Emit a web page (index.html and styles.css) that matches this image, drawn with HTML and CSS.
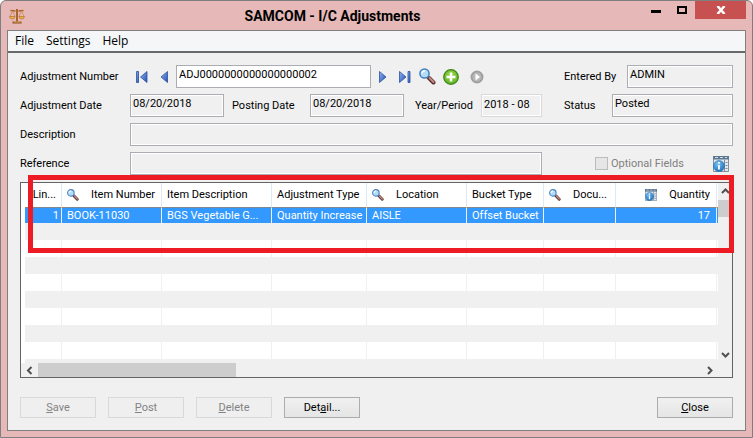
FILE: index.html
```html
<!DOCTYPE html>
<html lang="en">
<head>
  <meta charset="UTF-8">
  <meta name="viewport" content="width=device-width, initial-scale=1.0">
  <title>SAMCOM - I/C Adjustments</title>
  <link rel="stylesheet" href="styles.css">
</head>
<body>
  <!-- shared icons -->
  <svg class="sprite" width="0" height="0" aria-hidden="true">
    <defs>
      <linearGradient id="blue" x1="0" y1="0" x2="1" y2="1">
        <stop offset="0" stop-color="#8fb4f0"/>
        <stop offset="1" stop-color="#2450b4"/>
      </linearGradient>
      <radialGradient id="green" cx=".5" cy=".4" r=".6">
        <stop offset="0" stop-color="#a8dc50"/>
        <stop offset="1" stop-color="#5cb024"/>
      </radialGradient>
      <radialGradient id="info" cx=".4" cy=".3" r=".8">
        <stop offset="0" stop-color="#7cc4f4"/>
        <stop offset="1" stop-color="#1468b8"/>
      </radialGradient>
    </defs>
    <symbol id="i-search" viewBox="0 0 17 17">
      <path d="M10 10l4.500 4.500" stroke="#5a2c2c" stroke-width="4" stroke-linecap="round"/>
      <path d="M10.500 10l4 4" stroke="#c08c84" stroke-width="2" stroke-linecap="round"/>
      <circle cx="5.500" cy="5.500" r="4.600" fill="#b4dcfa" stroke="#4480bc" stroke-width="1.500"/>
      <path d="M3 5.500a2.500 2.500 0 0 1 3-2.500" stroke="#fff" stroke-width="1.500" fill="none"/>
    </symbol>
    <symbol id="i-info" viewBox="0 0 16 16">
      <path d="M.5 .5h15v15H.5z" fill="#e4e8ec" stroke="#8090a0"/>
      <path d="M0 0h16v3.500H0z" fill="#5c7890"/>
      <path d="M2 1.500h3M7 1.500h3M12 1.500h2" stroke="#c8dcec"/>
      <path d="M11.500 4v11M12.500 6.500h2M12.500 9.500h2M12.500 12.500h2" stroke="#7c8c9c"/>
      <circle cx="6" cy="10" r="5.500" fill="url(#info)" stroke="#2c70b0" stroke-width=".6"/>
      <path d="M6 9v4.500M6 6v1.700" stroke="#fff" stroke-width="1.700"/>
    </symbol>
  </svg>

  <div class="window">
    <header class="title-bar">
      <svg class="app-icon" width="16" height="16" viewBox="0 0 16 16" fill="none">
        <path d="M8 1v13" stroke="#a8642c" stroke-width="2"/>
        <path d="M1.500 2.500l5 .5M9.500 3l5-.5" stroke="#a8642c" stroke-width="1.600"/>
        <path d="M3.500 3l-2.500 5.500M3.500 3l2.500 5.500M12.500 3L10 8.500M12.500 3l2.500 5.500" stroke="#c88c50" stroke-width=".8"/>
        <path d="M.5 8.500h5.500q-.5 2.500-2.700 2.500T.5 8.500zM10 8.500h5.500q-.5 2.500-2.700 2.500T10 8.500z" fill="#f0b43c" stroke="#a8642c" stroke-width=".6"/>
        <path d="M3.500 14.500h9" stroke="#8c4c20" stroke-width="2"/>
        <path d="M4.500 14h7" stroke="#f0c060" stroke-width=".8"/>
      </svg>
      <h1 class="title">SAMCOM - I/C Adjustments</h1>
      <div class="window-controls">
        <button class="win-btn" aria-label="Minimize"><svg width="10" height="10"><path d="M0 5h10v3H0z"/></svg></button>
        <button class="win-btn" aria-label="Maximize"><svg width="10" height="10"><path d="M1 2h8v6H1z" fill="none" stroke="#000" stroke-width="2"/></svg></button>
        <button class="win-btn win-close" aria-label="Close window"><svg width="10" height="8"><path d="M1.500 0l7 8M8.500 0l-7 8" stroke="#fff" stroke-width="2.500"/></svg></button>
      </div>
    </header>

    <div class="client">
      <nav class="menu-bar">
        <button class="menu-item">File</button>
        <button class="menu-item">Settings</button>
        <button class="menu-item">Help</button>
      </nav>

      <main class="content">
        <form class="form">
          <div class="form-row">
            <div class="main-fields">
              <label class="label" for="adj-number">Adjustment Number</label>
              <div class="number-nav">
                <button type="button" class="icon-btn icon-first" aria-label="First"><svg width="12" height="12"><path d="M.5 .5h2v11h-2z" fill="url(#blue)" stroke="#2c509c" stroke-width=".8"/><path d="M11 .5v11L4.500 6z" fill="url(#blue)" stroke="#2c509c" stroke-width=".8"/></svg></button>
                <button type="button" class="icon-btn" aria-label="Previous"><svg width="8" height="12"><path d="M7.500 .5v11L1 6z" fill="url(#blue)" stroke="#2c509c" stroke-width=".8"/></svg></button>
                <input class="field number" id="adj-number" type="text" value="ADJ0000000000000000002">
                <button type="button" class="icon-btn" aria-label="Next"><svg width="8" height="12"><path d="M.5 .5v11L7 6z" fill="url(#blue)" stroke="#2c509c" stroke-width=".8"/></svg></button>
                <button type="button" class="icon-btn icon-last" aria-label="Last"><svg width="12" height="12"><path d="M.5 .5v11L7 6z" fill="url(#blue)" stroke="#2c509c" stroke-width=".8"/><path d="M9 .5h2v11H9z" fill="url(#blue)" stroke="#2c509c" stroke-width=".8"/></svg></button>
                <button type="button" class="icon-btn icon-find" aria-label="Find"><svg width="17" height="17"><use href="#i-search"/></svg></button>
                <button type="button" class="icon-btn icon-new" aria-label="New"><svg width="16" height="16"><circle cx="8" cy="8" r="7.300" fill="url(#green)" stroke="#3c8418" stroke-width="1.200"/><path d="M8 3.500v9M3.500 8h9" stroke="#fff" stroke-width="2.500"/></svg></button>
                <button type="button" class="icon-btn icon-go" aria-label="Go" disabled><svg width="14" height="14"><circle cx="7" cy="7" r="5.500" fill="#b8b8b8" stroke="#a0a0a0" stroke-width="2"/><path d="M5.500 3.500v7L10 7z" fill="#fff"/></svg></button>
              </div>
            </div>
            <div class="side-fields">
              <label class="label-side" for="entered-by">Entered By</label>
              <input class="field grow" id="entered-by" type="text" value="ADMIN" readonly>
            </div>
          </div>

          <div class="form-row">
            <div class="main-fields">
              <label class="label" for="adj-date">Adjustment Date</label>
              <input class="field date" id="adj-date" type="text" value="08/20/2018" readonly>
              <label class="label-posting" for="post-date">Posting Date</label>
              <input class="field date" id="post-date" type="text" value="08/20/2018" readonly>
              <label class="label-period" for="period">Year/Period</label>
              <input class="field period grow" id="period" type="text" value="2018 - 08" disabled>
            </div>
            <div class="side-fields">
              <label class="label-status" for="status">Status</label>
              <input class="field grow" id="status" type="text" value="Posted" readonly>
            </div>
          </div>

          <div class="form-row form-row-full">
            <div class="main-fields">
              <label class="label" for="description">Description</label>
              <input class="field grow" id="description" type="text" readonly>
            </div>
          </div>

          <div class="form-row">
            <div class="main-fields">
              <label class="label" for="reference">Reference</label>
              <input class="field grow" id="reference" type="text" readonly>
            </div>
            <div class="side-fields optional">
              <input class="check" id="optional" type="checkbox" disabled>
              <label class="label-optional" for="optional">Optional Fields</label>
              <button type="button" class="icon-btn icon-optional" aria-label="Optional fields"><svg width="16" height="16"><use href="#i-info"/></svg></button>
            </div>
          </div>
        </form>

        <div class="grid">
          <div class="grid-view">
            <div class="grid-rows">
              <table class="lines">
                <colgroup>
                  <col class="c-pad"><col class="c-line"><col class="c-item"><col class="c-desc"><col class="c-type">
                  <col class="c-loc"><col class="c-bucket"><col class="c-docu"><col><col class="c-end">
                </colgroup>
                <thead>
                  <tr>
                    <td class="pad"></td>
                    <th class="num">Lin...</th>
                    <th><span class="th-icon"><svg width="12" height="12"><use href="#i-search"/></svg>Item Number</span></th>
                    <th>Item Description</th>
                    <th>Adjustment Type</th>
                    <th><span class="th-icon"><svg width="12" height="12"><use href="#i-search"/></svg>Location</span></th>
                    <th>Bucket Type</th>
                    <th><span class="th-icon"><svg width="12" height="12"><use href="#i-search"/></svg>Docu...</span></th>
                    <th><span class="th-icon th-qty"><svg width="12" height="12"><use href="#i-info"/></svg>Quantity</span></th>
                    <td class="end"></td>
                  </tr>
                </thead>
                <tbody>
                  <tr class="selected"><td class="pad"></td><td class="num">1</td><td>BOOK-11030</td><td>BGS Vegetable G...</td><td>Quantity Increase</td><td>AISLE</td><td>Offset Bucket</td><td></td><td class="num qty">17</td><td class="end"></td></tr>
                  <tr><td class="pad"></td><td></td><td></td><td></td><td></td><td></td><td></td><td></td><td></td><td class="end"></td></tr>
                  <tr><td class="pad"></td><td></td><td></td><td></td><td></td><td></td><td></td><td></td><td></td><td class="end"></td></tr>
                  <tr><td class="pad"></td><td></td><td></td><td></td><td></td><td></td><td></td><td></td><td></td><td class="end"></td></tr>
                  <tr><td class="pad"></td><td></td><td></td><td></td><td></td><td></td><td></td><td></td><td></td><td class="end"></td></tr>
                  <tr><td class="pad"></td><td></td><td></td><td></td><td></td><td></td><td></td><td></td><td></td><td class="end"></td></tr>
                  <tr><td class="pad"></td><td></td><td></td><td></td><td></td><td></td><td></td><td></td><td></td><td class="end"></td></tr>
                  <tr><td class="pad"></td><td></td><td></td><td></td><td></td><td></td><td></td><td></td><td></td><td class="end"></td></tr>
                  <tr><td class="pad"></td><td></td><td></td><td></td><td></td><td></td><td></td><td></td><td></td><td class="end"></td></tr>
                  <tr><td class="pad"></td><td></td><td></td><td></td><td></td><td></td><td></td><td></td><td></td><td class="end"></td></tr>
                </tbody>
              </table>
            </div>
            <div class="scroll-y">
              <svg width="14" height="17"><path d="M4 10l3.500-3.500L11 10" fill="none" stroke="#505050" stroke-width="2"/></svg>
              <div class="thumb-y"></div>
              <svg class="scroll-down" width="14" height="17"><path d="M4 7l3.500 3.500L11 7" fill="none" stroke="#505050" stroke-width="2"/></svg>
            </div>
          </div>
          <div class="scroll-x">
            <svg width="17" height="14"><path d="M10.500 4L7 7.500l3.500 3.500" fill="none" stroke="#505050" stroke-width="2"/></svg>
            <div class="thumb-x"></div>
            <svg class="scroll-right" width="17" height="14"><path d="M7 4l3.500 3.500L7 11" fill="none" stroke="#505050" stroke-width="2"/></svg>
          </div>
          <div class="highlight"></div>
        </div>

        <footer class="actions">
          <button class="btn" disabled><u>S</u>ave</button>
          <button class="btn" disabled><u>P</u>ost</button>
          <button class="btn" disabled><u>D</u>elete</button>
          <button class="btn">Det<u>a</u>il...</button>
          <button class="btn btn-close"><u>C</u>lose</button>
        </footer>
      </main>
    </div>
  </div>
</body>
</html>
```
FILE: styles.css
```css
:root {
  --frame: #e6b8b7;
  --frame-line: #7f7f7f;
  --face: #f0f0f0;
  --field-line: #abadb3;
  --select: #3399ff;
  --mark: #ed1c24;
  --ui-font: Roboto, "Liberation Sans", sans-serif;
}

* {
  box-sizing: border-box;
}

body {
  margin: 0;
  background: #fff;
  color: #000;
  font-family: var(--ui-font);
  font-size: 11px;
  line-height: 16px;
}

button,
input {
  font: inherit;
  color: inherit;
  margin: 0;
}

label {
  white-space: nowrap;
}

svg {
  display: block;
  flex: none;
}

.sprite {
  position: absolute;
}

.window {
  min-height: 100vh;
  display: flex;
  flex-direction: column;
  padding: 0 6px 6px;
  background: var(--frame);
  border: 1px solid var(--frame-line);
  border-radius: 6px 6px 0 0;
}

/* title bar */
.title-bar {
  height: 29px;
  display: grid;
  grid-template-columns: 1fr auto 1fr;
}

.app-icon {
  margin: 7px 0 0 2px;
}

.title {
  margin: 0;
  padding: 6px 88px 0 0;
  font-size: 14px;
  line-height: 18px;
  font-weight: bold;
}

.window-controls {
  display: flex;
  justify-content: flex-end;
  align-items: flex-start;
}

.win-btn {
  width: 26px;
  height: 18px;
  display: flex;
  align-items: center;
  justify-content: center;
  padding: 0;
  border: none;
  background: none;
}

.win-close {
  width: 51px;
  background: #c75050;
}

.client {
  flex: 1;
  display: flex;
  flex-direction: column;
  background: var(--face);
  border: 1px solid var(--frame-line);
}

.menu-bar {
  height: 22px;
  display: flex;
  gap: 12px;
  padding-left: 7px;
  background: #f5f6f7;
  border-bottom: 2px solid #696969;
}

.menu-item {
  padding: 0;
  border: none;
  background: none;
  font-family: "Open Sans", sans-serif;
  font-size: 12px;
}

.content {
  flex: 1;
  display: flex;
  flex-direction: column;
  padding: 12px 12px 11px;
}

/* form */
.form {
  display: flex;
  flex-direction: column;
  gap: 6px;
}

.form-row {
  display: grid;
  grid-template-columns: 1fr 169px;
  column-gap: 22px;
}

.form-row-full {
  grid-template-columns: 1fr;
}

.main-fields,
.side-fields,
.number-nav {
  display: flex;
  align-items: center;
  min-width: 0;
}

.label {
  width: 110px;
  flex: none;
}

.field {
  height: 23px;
  min-width: 0;
  padding: 0 2px 4px;
  background: #fff;
  border: 1px solid var(--field-line);
  border-radius: 0;
  outline: none;
}

.field:read-only {
  background: var(--face);
  box-shadow: inset 0 0 0 1px #fff;
}

.field:disabled {
  border-color: #d9d9d9;
  padding-bottom: 2px;
}

.grow {
  flex: 1;
  width: 0;
}

.number-nav {
  flex: 1;
}

.number {
  flex: 1;
  width: 0;
  margin: 0 8px;
}

.icon-btn {
  padding: 0;
  border: none;
  background: none;
}

.icon-first {
  margin: 0 12px 0 6px;
}

.icon-last {
  margin-left: 12px;
}

.icon-find {
  margin-left: 8px;
}

.icon-new {
  margin-left: 7px;
}

.icon-go {
  margin: 0 58px 0 11px;
}

.date {
  width: 94px;
}

.label-posting {
  width: 86px;
  padding-left: 8px;
}

.label-period {
  width: 77px;
  padding-left: 11px;
}

.label-side {
  width: 63px;
}

.label-status {
  width: 48px;
}

.optional {
  padding-left: 31px;
  color: #808080;
}

.check {
  appearance: none;
  width: 13px;
  height: 13px;
  background: #e6e6e6;
  border: 1px solid #bcbcbc;
}

.label-optional {
  padding-left: 3px;
}

.icon-optional {
  margin: 0 4px 0 auto;
}

/* lines grid */
.grid {
  position: relative;
  height: 196px;
  margin-top: 7px;
  display: flex;
  flex-direction: column;
  border: 1px solid #646464;
  background: #fff;
}

.grid-view {
  flex: 1;
  min-height: 0;
  display: flex;
}

.grid-rows {
  flex: 1;
  overflow: hidden;
}

.lines {
  width: 100%;
  table-layout: fixed;
  border-collapse: separate;
  border-spacing: 0;
}

.c-pad {
  width: 4px;
}

.c-line {
  width: 37px;
}

.c-item {
  width: 100px;
}

.c-desc {
  width: 110px;
}

.c-type {
  width: 95px;
}

.c-loc {
  width: 100px;
}

.c-bucket {
  width: 77px;
}

.c-docu {
  width: 72px;
}

.c-end {
  width: 1px;
}

.lines th,
.lines td {
  padding: 0 3px 0 5px;
  text-align: left;
  font-weight: normal;
  white-space: nowrap;
  overflow: hidden;
}

.lines th {
  height: 24px;
  border-right: 1px solid #dfe9f5;
}

.lines tbody td {
  height: 17px;
  line-height: 16px;
  border-right: 1px solid #f0f0f0;
}

.lines tbody tr:nth-child(even) td {
  background: #f0f0f0;
}

.lines tbody .selected td {
  height: 16px;
  line-height: 15px;
  background: var(--select);
  border-top: 1px dotted #c87828;
  color: #fff;
}

.lines td.pad,
.lines td.end {
  padding: 0;
  border-right: none;
}

.lines tbody tr td.pad {
  background: #fff;
  border-top: none;
}

.lines .num {
  padding-right: 2px;
  text-align: right;
}

.lines th.num {
  padding-right: 5px;
}

.lines .qty {
  padding-right: 6px;
}

.th-icon {
  display: flex;
  align-items: center;
  gap: 12px;
}

.th-qty {
  justify-content: flex-end;
  padding-right: 3px;
}

.scroll-y {
  width: 14px;
  display: flex;
  flex-direction: column;
  background: var(--face);
}

.thumb-y {
  height: 17px;
  background: #cdcdcd;
}

.scroll-down {
  margin-top: auto;
}

.scroll-x {
  height: 14px;
  display: flex;
  padding-right: 14px;
  background: var(--face);
}

.thumb-x {
  width: 198px;
  background: #cdcdcd;
}

.scroll-right {
  margin-left: auto;
}

/* red frame over the first line */
.highlight {
  position: absolute;
  top: -8px;
  left: 7px;
  right: -2px;
  height: 78px;
  border: 5px solid var(--mark);
}

/* buttons */
.actions {
  display: flex;
  gap: 12px;
  margin-top: 19px;
}

.btn {
  width: 76px;
  height: 21px;
  padding: 0;
  background: linear-gradient(#f0f0f0, #e5e5e5);
  border: 1px solid #acacac;
}

.btn:disabled {
  background: #efefef;
  border-color: #d9d9d9;
  color: #838383;
}

.btn-close {
  margin-left: auto;
}
```
